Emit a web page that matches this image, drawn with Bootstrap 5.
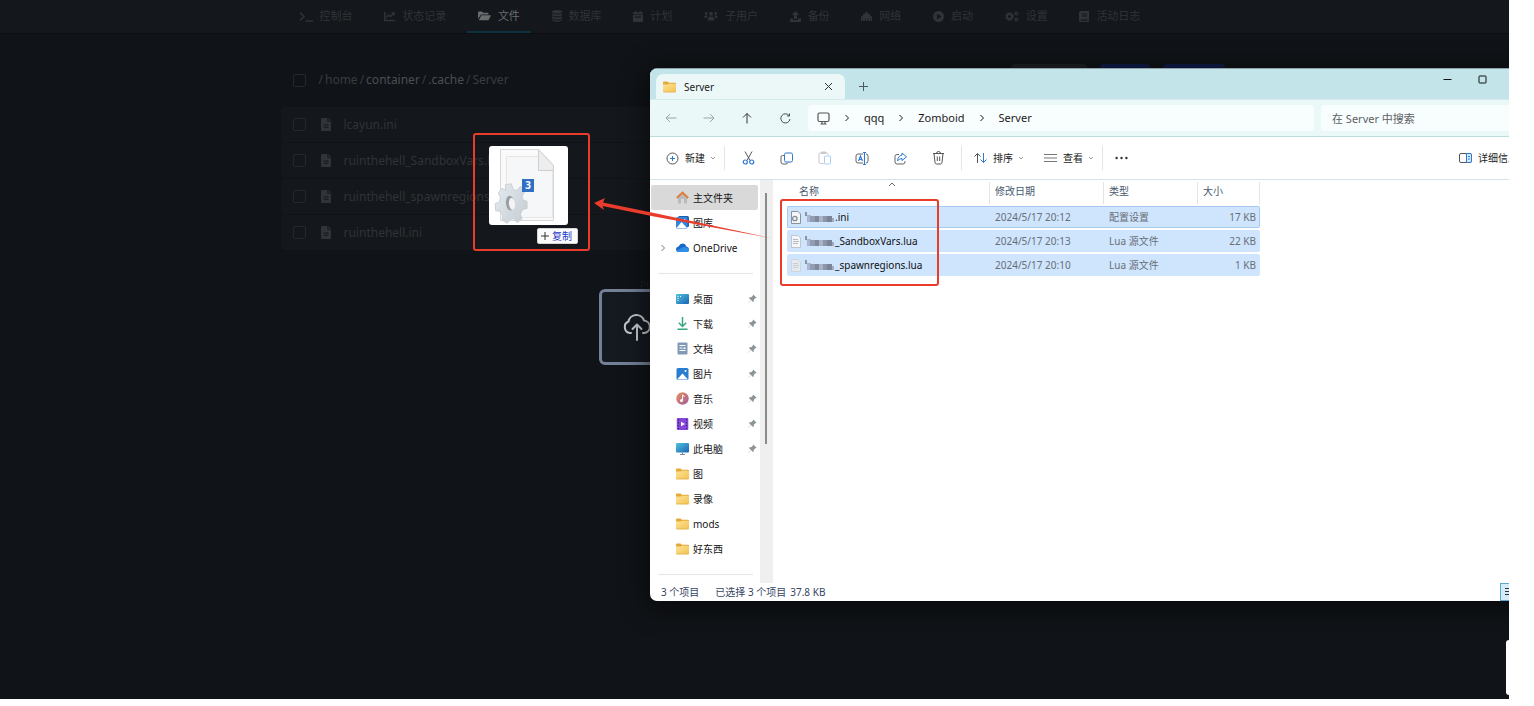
<!DOCTYPE html>
<html lang="zh-CN">
<head>
<meta charset="utf-8">
<meta name="viewport" content="width=device-width, initial-scale=1">
<title>文件 - Server</title>
<link href="https://cdn.jsdelivr.net/npm/bootstrap@5.3.0/dist/css/bootstrap.min.css" rel="stylesheet">
<style>
  body { background: #fff; font-family: "Noto Sans", "Noto Sans CJK SC", sans-serif; }
  a { text-decoration: none; color: inherit; }
  svg { display: block; flex: none; }
  button.btn { --bs-btn-border-width: 0px; font-size: inherit; line-height: inherit; color: inherit; border-radius: 4px; }

  .desktop { margin-right: 25px; min-height: calc(100vh - 7px); background: #101317; color: #35383c; font-size: 12px; }

  /* panel */
  .panel-nav { background: #14171b; height: 34px; border-bottom: 1px solid #0c0e11; }
  .panel-wrap { max-width: 948px; }
  .panel-nav .panel-wrap { height: 33px; padding: 0 77px 0 7px; }
  .panel-nav a { display: flex; align-items: center; gap: 7px; padding: 1px 11px 0; font-size: 11px; color: #313437; white-space: nowrap; border-bottom: 2px solid transparent; }
  .panel-nav a.active { color: #6a6c6e; border-color: #0d3140; }
  .crumbs { margin-top: 30px; height: 32px; padding-left: 12px; }
  .crumb-path { gap: 2px; margin-left: 13px; }
  .crumbs a { color: #4c4f52; }
  .crumbs .dim { color: #3a3d40; }
  .tick { appearance: none; width: 13px; height: 13px; margin: 0; border: 1px solid #24282d; border-radius: 2px; background: transparent; }
  .pbtn { height: 32px; border-radius: 4px; background: #101b48; }
  .pbtn-dir { width: 76px; background: #1d2024; }
  .pbtn-up { width: 50px; margin: 0 13px; }
  .pbtn-new { width: 62px; }
  .file-list { margin-top: 11px; }
  .file-row { height: 35px; margin-bottom: 1px; padding-left: 12px; background: #14171b; border-radius: 3px; color: #303337; }
  .file-row svg { margin: 0 12px 0 15px; }
  .foot { font-size: 10px; line-height: 14px; margin-top: 28px; color: #1d2024; }
  .drop-zone { top: 289px; }
  .drop-card { width: 312px; height: 76px; padding-left: 20px; border: 3px solid #738096; border-radius: 6px; background: #151a21; color: #c3c6cb; }

  /* explorer window */
  .explorer { top: 68px; left: 650px; right: -26px; background: #fff; color: #1b1b1b; font-size: 10px; line-height: 16px; border-top: 1px solid #8ba3a8; border-radius: 7px; box-shadow: 0 4px 28px rgba(0,0,0,.65); overflow: hidden; }
  .titlebar { height: 30px; background: #c3e5ea; padding-left: 6px; }
  .tab { width: 189px; height: 25px; margin-top: 5px; padding: 0 11px 0 7px; gap: 8px; background: #ecf8f8; border-radius: 7px 7px 0 0; }
  .new-tab { width: 20px; }
  .win-btn { width: 35px; height: 21px; }
  .addressbar { height: 38px; background: #ebf8f8; border-top: 1px solid #d5ecee; border-bottom: 1px solid #bcdcdf; font-size: 11px; padding: 0 7px 0 2px; }
  .nav-btn { width: 38px; height: 26px; color: #4a4f52 !important; }
  .nav-btn.off { color: #9aa5a7 !important; }
  .address, .search { height: 26px; background: #f8fdfe; border-radius: 4px; }
  .address { margin-left: 4px; padding-left: 9px; gap: 14px; }
  .search { width: 207px; margin-left: 7px; border: 0; padding: 0 11px; font-size: 11px; color: #555; outline: 0; }
  .search::placeholder { color: #5c6163; opacity: 1; }
  .toolbar { height: 43px; border-bottom: 1px solid #cfe5e8; padding: 0 12px 0 16px; }
  .toolbar .labelled { display: flex; align-items: center; white-space: nowrap; }
  .labelled span { margin: 0 5px 0 6px; }
  .tool { width: 38px; height: 26px; }
  .vsep { width: 1px; height: 24px; background: #e3e5e6; }
  .chev { color: #8d9092; }
  .side { width: 110px; padding-top: 5px; }
  .side a { display: flex; align-items: center; height: 25px; margin: 0 2px 0 1px; padding: 0 1px 0 25px; color: #151515; white-space: nowrap; position: relative; }
  .side a span { margin-left: 4px; }
  .side a.sel { background: #d9d9d9; border-radius: 2px; }
  .side .pin { margin-left: auto; color: #8b9499; }
  .side .twist { position: absolute; left: 9px; color: #777; }
  .side-rule { height: 26px; padding: 13px 7px 0 8px; }
  .side-rule.last { height: 22px; }
  .side-rule hr { margin: 0; border-color: #999; }
  .track { width: 13px; background: #efefef; padding: 13px 0 0 5px; }
  .thumb { width: 2px; height: 251px; background: #8a8a8a; }
  .files { margin-left: 14px; width: 473px; border-collapse: separate; border-spacing: 0 2px; table-layout: fixed; }
  .col-name { width: 203px; }
  .col-date { width: 114px; }
  .col-kind { width: 94px; }
  .files th { height: 22px; padding: 0 5px 4px; font-weight: 400; color: #47586f; border-right: 1px solid #e2e4e6; position: relative; }
  .files th:first-child { padding-left: 12px; }
  .files td { height: 22px; padding: 0 4px 0 5px; line-height: 20px; background: #cfe5fe; color: #686e76; white-space: nowrap; }
  .files td:first-child { color: #111; padding-left: 4px; border-radius: 2px 0 0 2px; }
  .files td:last-child { text-align: right; border-radius: 0 2px 2px 0; }
  .files .focused td { border: 1px solid #a5cbf2; border-width: 1px 0; }
  .files .focused td:first-child { border-left-width: 1px; padding-left: 3px; }
  .files .focused td:last-child { border-right-width: 1px; padding-right: 3px; }
  .sort-mark { left: 101px; top: 0; color: #666; }
  .status { height: 18px; padding-left: 11px; color: #34465f; }
  .view-btn { width: 20px; height: 18px; margin-right: 15px; background: #d5ebf7 !important; border: 1px solid #5fa5d0 !important; border-radius: 0 !important; }

  /* drag image and markup */
  .drag-image { left: 489px; top: 146px; width: 79px; height: 79px; background: #fff; border-radius: 3px; }
  .drag-count { left: 33px; top: 33px; width: 12px; height: 13px; background: #2f6fc6; color: #fff; font-size: 10px; font-weight: 700; line-height: 13px; }
  .drag-tip { left: 537px; top: 228px; width: 41px; height: 16px; background: #fbfbfb; border: 1px solid #d5d5d5; border-radius: 2px; color: #2437c8; font-size: 10px; line-height: 14px; gap: 3px; padding-left: 3px; }
  .mark-box { border: 2px solid #e93c2b; border-radius: 3px; pointer-events: none; }
  .mark-a { left: 473px; top: 133px; width: 117px; height: 118px; }
  .mark-b { left: 780px; top: 199px; width: 159px; height: 87px; }
  .mark-arrow { left: 594px; top: 198px; pointer-events: none; }
  .side-widget { right: 0; top: 640px; width: 3px; height: 55px; background: #fff; border-radius: 3px 0 0 3px; }
</style>
</head>
<body>
<svg width="0" height="0" class="position-absolute" aria-hidden="true">
  <defs>
    <linearGradient id="gf" x1="0" y1="0" x2="1" y2="1"><stop offset="0" stop-color="#fde396"/><stop offset="1" stop-color="#f3c252"/></linearGradient>
    <linearGradient id="gb" x1="0" y1="0" x2="1" y2="1"><stop offset="0" stop-color="#4fc3dc"/><stop offset="1" stop-color="#1b63b5"/></linearGradient>
    <linearGradient id="gm" x1="0" y1="0" x2="1" y2="1"><stop offset="0" stop-color="#e8935a"/><stop offset="1" stop-color="#a05a9e"/></linearGradient>
    <linearGradient id="gg" x1="0" y1="0" x2="1" y2="1"><stop offset="0" stop-color="#e6ecf0"/><stop offset="1" stop-color="#c4ccd2"/></linearGradient>
    <symbol id="folder" viewBox="0 0 13 12"><path d="M0 1.5Q0 .5 1 .5h3.5l1.3 1.2H12q1 0 1 1V6H0z" fill="#e5a938"/><path d="M0 3.600h5l1-.9h6q1 0 1 1v6.600q0 1-1 1H1q-1 0-1-1z" fill="url(#gf)"/><path d="M.3 11h12.400" stroke="#dba53a" stroke-width=".6"/></symbol>
    <symbol id="doc" viewBox="0 0 12 14"><path fill="currentColor" fill-rule="evenodd" d="M1 0h6v4h4v9q0 1-1 1H1q-1 0-1-1V1q0-1 1-1zm7 0l3 3H8zM3 7v1h5V7zm0 2.500v1h5v-1z"/></symbol>
    <symbol id="pin" viewBox="0 0 9 9"><path fill="currentColor" d="M5.200.4l3.400 3.400-.8.5-.6 0-1.500 1.600.1 1.600-.8.6-2-2L.7 8.600l-.3-.3 2.500-2.400-2-2 .7-.7 1.600.1L4.800 1.800z"/></symbol>
    <symbol id="right" viewBox="0 0 6 8"><path d="M1.500 1l3 3-3 3" fill="none" stroke="currentColor"/></symbol>
    <symbol id="down" viewBox="0 0 6 4"><path d="M1 1l2 2 2-2" fill="none" stroke="currentColor" stroke-width=".9"/></symbol>
    <symbol id="blur" viewBox="0 0 30 12">
      <path d="M0 1h2v4H0z" fill="#8a93a6"/><path d="M2 4h4v7H2z" fill="#a9b6cc"/><path d="M5 5h5v6H5z" fill="#939eb3"/><path d="M10 5h4v6h-4z" fill="#7f899c"/><path d="M14 5h4v6h-4z" fill="#a6b3c9"/><path d="M18 5h4v6h-4z" fill="#8c96ab"/><path d="M22 5h5v6h-5z" fill="#7b8397"/><path d="M27 7h2v4h-2z" fill="#9dabc3"/>
    </symbol>
  </defs>
</svg>

<main class="desktop position-relative overflow-hidden">
  <nav class="panel-nav">
    <div class="panel-wrap mx-auto d-flex justify-content-between">
      <a href="#"><svg width="14" height="11" viewBox="0 0 14 11" fill="none" stroke="currentColor" stroke-width="1.600"><path d="M1 1.500l4 4-4 4M6.500 10H14"/></svg>控制台</a>
      <a href="#"><svg width="11" height="11" viewBox="0 0 11 11" fill="none" stroke="currentColor" stroke-width="1.500"><path d="M.8 1v8.500H11M2.500 6.500l2-2.500 2 1.500L10 2M7.500 2H10v2.500"/></svg>状态记录</a>
      <a href="#" class="active"><svg width="13" height="10" viewBox="0 0 13 10" fill="currentColor"><path d="M0 1.500Q0 .5 1 .5h3l1.200 1.200H9.500q1 0 1 1v.8H3L0 8z"/><path d="M3.400 4.300H13L10.500 9.200H.8z"/></svg>文件</a>
      <a href="#"><svg width="10" height="12" viewBox="0 0 10 12" fill="currentColor"><ellipse cx="5" cy="1.800" rx="5" ry="1.800"/><path d="M0 3.200q5 2.400 10 0v2q-5 2.600-10 0zM0 6.300q5 2.400 10 0v2q-5 2.600-10 0zM0 9.300q5 2.400 10 0v1q-5 3-10 0z"/></svg>数据库</a>
      <a href="#"><svg width="10" height="11" viewBox="0 0 10 11" fill="currentColor"><path fill-rule="evenodd" d="M2 0h1.300v1.300h3.400V0H8v1.300h2v2H0v-2h2zM0 4h10v7H0zm2 1.500v1.300h6V5.500z"/></svg>计划</a>
      <a href="#"><svg width="14" height="10" viewBox="0 0 14 10" fill="currentColor"><circle cx="7" cy="2.800" r="2"/><circle cx="2.200" cy="2.300" r="1.400"/><circle cx="11.800" cy="2.300" r="1.400"/><path d="M3.500 9.500Q3.500 5.500 7 5.500t3.500 4zM0 6.700Q0 4.200 2.200 4.200q1.300 0 1.800.8Q3 6 2.900 6.700zM14 6.700q0-2.500-2.200-2.500-1.300 0-1.800.8 1 1 1.100 1.700z"/></svg>子用户</a>
      <a href="#"><svg width="11" height="11" viewBox="0 0 11 11" fill="currentColor"><path d="M5.500 0L9.300 4H7v4H4V4H1.700zM0 7.500h3V9h5V7.500h3V11H0z"/></svg>备份</a>
      <a href="#"><svg width="11" height="9" viewBox="0 0 11 9" fill="currentColor"><path d="M0 9V4.500L2 4V2l2-.3L4.500 0h2L7 1.700 9 2v2l2 .5V9H9.500V6.500H9V9H7.200V6.500h-.6V9H4.500V6.500h-.6V9H2V6.500h-.5V9z"/></svg>网络</a>
      <a href="#"><svg width="11" height="11" viewBox="0 0 11 11" fill="currentColor"><path fill-rule="evenodd" d="M5.500 0a5.500 5.500 0 110 11 5.500 5.500 0 010-11zM4 2.800v5.400l4.500-2.700z"/></svg>启动</a>
      <a href="#"><svg width="14" height="11" viewBox="0 0 14 11" fill="none" stroke="currentColor"><circle cx="4.500" cy="5.500" r="2.500" stroke-width="2"/><circle cx="4.500" cy="5.500" r="4" stroke-dasharray="1.800 1.340"/><circle cx="11.500" cy="2.500" r="1.300" stroke-width="1.300"/><circle cx="11.500" cy="8.500" r="1.300" stroke-width="1.300"/></svg>设置</a>
      <a href="#"><svg width="10" height="11" viewBox="0 0 10 11" fill="currentColor"><path fill-rule="evenodd" d="M1.500 0H10v8.500H9.500v1.300h.5V11H1.500Q0 11 0 9.500v-8Q0 0 1.500 0zM3 2.500v1h5v-1zm0 2v1h5v-1zM1.800 8.500v1.300h6.700V8.500z"/></svg>活动日志</a>
    </div>
  </nav>

  <div class="panel-wrap mx-auto">
    <div class="crumbs d-flex align-items-center">
      <input type="checkbox" class="tick" aria-label="全选">
      <div class="crumb-path d-flex flex-grow-1">
        <span class="dim">/</span><a href="#" class="dim">home</a><span class="dim">/</span><a href="#">container</a><span class="dim">/</span><a href="#">.cache</a><span class="dim">/</span><span class="dim">Server</span>
      </div>
      <div class="d-flex me-1">
        <button class="btn pbtn pbtn-dir p-0" aria-label="新建目录"></button>
        <button class="btn pbtn pbtn-up p-0" aria-label="上传"></button>
        <button class="btn pbtn pbtn-new p-0" aria-label="新建文件"></button>
      </div>
    </div>
    <div class="file-list">
      <div class="file-row d-flex align-items-center"><input type="checkbox" class="tick" id="f1"><svg width="11" height="13"><use href="#doc"/></svg><label for="f1">lcayun.ini</label></div>
      <div class="file-row d-flex align-items-center"><input type="checkbox" class="tick" id="f2"><svg width="11" height="13"><use href="#doc"/></svg><label for="f2">ruinthehell_SandboxVars.lua</label></div>
      <div class="file-row d-flex align-items-center"><input type="checkbox" class="tick" id="f3"><svg width="11" height="13"><use href="#doc"/></svg><label for="f3">ruinthehell_spawnregions.lua</label></div>
      <div class="file-row d-flex align-items-center"><input type="checkbox" class="tick" id="f4"><svg width="11" height="13"><use href="#doc"/></svg><label for="f4">ruinthehell.ini</label></div>
    </div>
    <p class="foot text-center mb-0">Pterodactyl® © 2015 - 2024 Pterodactyl Software</p>
  </div>

  <div class="drop-zone position-absolute start-0 end-0 d-flex justify-content-center">
    <div class="drop-card d-flex align-items-center">
      <svg width="30" height="30" viewBox="0 0 30 30" fill="none" stroke="currentColor" stroke-width="2" stroke-linecap="round" stroke-linejoin="round"><path d="M9 21H8a6 6 0 01-1.500-11.500A8 8 0 0122 8.500 6.300 6.300 0 0122.500 21H21M15 28V13M10.500 17L15 12.500l4.500 4.500"/></svg>
    </div>
  </div>

  <section class="explorer position-absolute">
    <header class="titlebar d-flex">
      <div class="tab d-flex align-items-center">
        <svg width="13" height="12"><use href="#folder"/></svg>
        <span class="flex-grow-1">Server</span>
        <button class="btn p-0" aria-label="关闭标签页"><svg width="11" height="11" viewBox="0 0 11 11" fill="none" stroke="#333"><path d="M2 2l7 7M9 2L2 9"/></svg></button>
      </div>
      <button class="btn new-tab p-0 mt-1 ms-2" aria-label="新标签页"><svg class="mx-auto" width="9" height="9" viewBox="0 0 9 9" stroke="#4c5a5d"><path d="M4.500 0v9M0 4.500h9"/></svg></button>
      <div class="ms-auto d-flex">
        <button class="btn win-btn p-0 d-flex align-items-center justify-content-center" aria-label="最小化"><svg width="9" height="9" viewBox="0 0 9 9" stroke="#111"><path d="M.5 4.500h8"/></svg></button>
        <button class="btn win-btn p-0 d-flex align-items-center justify-content-center" aria-label="最大化"><svg width="9" height="9" viewBox="0 0 9 9" fill="none" stroke="#111"><rect x="1" y="1" width="7" height="7" rx=".5"/></svg></button>
        <button class="btn win-btn p-0 d-flex align-items-center justify-content-center" aria-label="关闭"><svg width="9" height="9" viewBox="0 0 9 9" stroke="#111"><path d="M1 1l7 7M8 1L1 8"/></svg></button>
      </div>
    </header>

    <div class="addressbar d-flex align-items-center">
      <button class="btn nav-btn off p-0 d-flex align-items-center justify-content-center" aria-label="后退"><svg width="12" height="10" viewBox="0 0 12 10" fill="none" stroke="currentColor"><path d="M11.500 5H1M5 1L1 5l4 4"/></svg></button>
      <button class="btn nav-btn off p-0 d-flex align-items-center justify-content-center" aria-label="前进"><svg width="12" height="10" viewBox="0 0 12 10" fill="none" stroke="currentColor"><path d="M.5 5H11M7 1l4 4-4 4"/></svg></button>
      <button class="btn nav-btn p-0 d-flex align-items-center justify-content-center" aria-label="向上"><svg width="10" height="12" viewBox="0 0 10 12" fill="none" stroke="#333"><path d="M5 11.500V1.500M1 5.500l4-4 4 4"/></svg></button>
      <button class="btn nav-btn p-0 d-flex align-items-center justify-content-center" aria-label="刷新"><svg width="11" height="11" viewBox="0 0 11 11" fill="none" stroke="currentColor"><path d="M9 2.500A4.600 4.600 0 1010 6M9.500.5v2.500H7"/></svg></button>
      <div class="address flex-grow-1 d-flex align-items-center">
        <svg width="13" height="13" viewBox="0 0 13 13" fill="none" stroke="#555" stroke-width="1.200"><rect x="1" y="1" width="11" height="8.500" rx="1.500"/><path d="M5 9.500v2M8 9.500v2M3.500 12h6"/></svg>
        <svg width="6" height="8"><use href="#right"/></svg><a href="#">qqq</a>
        <svg width="6" height="8"><use href="#right"/></svg><a href="#">Zomboid</a>
        <svg width="6" height="8"><use href="#right"/></svg><a href="#">Server</a>
      </div>
      <input type="search" class="search" placeholder="在 Server 中搜索" aria-label="搜索">
    </div>

    <div class="toolbar d-flex align-items-center">
      <button class="btn p-0 labelled"><svg width="13" height="13" viewBox="0 0 13 13" fill="none" stroke="#555"><circle cx="6.500" cy="6.500" r="5.500"/><path d="M6.500 4v5M4 6.500h5" stroke="#2f78d0"/></svg><span>新建</span><svg class="chev" width="6" height="4"><use href="#down"/></svg></button>
      <span class="vsep ms-2 me-1"></span>
      <button class="btn tool p-0 d-flex align-items-center justify-content-center" aria-label="剪切"><svg width="13" height="14" viewBox="0 0 13 14" fill="none" stroke="#555"><path d="M3 .5l5 9M10 .5l-5 9"/><g stroke="#2f78d0" stroke-width="1.200"><circle cx="3.300" cy="11" r="2"/><circle cx="9.700" cy="11" r="2"/></g></svg></button>
      <button class="btn tool p-0 d-flex align-items-center justify-content-center" aria-label="复制"><svg width="13" height="13" viewBox="0 0 13 13" fill="none"><path d="M4 3.500H2.500Q1 3.500 1 5v5q0 2 2 2h3q1.500 0 2-1.500" stroke="#666"/><rect x="4.500" y="1" width="8" height="9" rx="1.500" stroke="#2f78d0"/></svg></button>
      <button class="btn tool p-0 d-flex align-items-center justify-content-center" aria-label="粘贴"><svg width="13" height="14" viewBox="0 0 13 14" fill="none"><path d="M5.500 12.500H2.500Q1 12.500 1 11V3q0-1.200 1.500-1.200h6Q10 1.800 10 3.500M3.500 1h4v1.500h-4z" stroke="#c4c7c9"/><rect x="6.500" y="5" width="6" height="8" rx="1" stroke="#a9cdf3"/></svg></button>
      <button class="btn tool p-0 d-flex align-items-center justify-content-center" aria-label="重命名"><svg width="14" height="13" viewBox="0 0 14 13" fill="none"><path d="M8 11H3Q1 11 1 9V4q0-2 2-2h5M11 2q2 0 2 2v5q0 2-2 2" stroke="#666"/><path d="M3.500 9L5.500 4l2 5M4.300 7.500h2.500M9.500.5v12M8 .5h3M8 12.500h3" stroke="#2f78d0" stroke-width="1.100"/></svg></button>
      <button class="btn tool p-0 d-flex align-items-center justify-content-center" aria-label="共享"><svg width="13" height="13" viewBox="0 0 13 13" fill="none"><path d="M5 2.500H3Q1 2.500 1 4.500V10q0 2 2 2h6q2 0 2-2V9" stroke="#666"/><path d="M8 1l4.500 3.800L8 8.500v-2q-3 0-4.500 2.500Q4 3.500 8 3.200z" stroke="#2f78d0"/></svg></button>
      <button class="btn tool p-0 d-flex align-items-center justify-content-center" aria-label="删除"><svg width="13" height="14" viewBox="0 0 13 14" fill="none" stroke="#555"><path d="M1 2.500h11M4.500 2.500q0-2 2-2t2 2M2 2.500l1 9q.2 1.500 1.500 1.500h4q1.300 0 1.500-1.500l1-9M5.300 5.500v4.500M7.700 5.500v4.500"/></svg></button>
      <span class="vsep me-2 ms-1"></span>
      <button class="btn p-0 labelled ms-1"><svg width="13" height="12" viewBox="0 0 13 12" fill="none"><path d="M3.500 11V1.500M.5 4.500l3-3 3 3" stroke="#555"/><path d="M9.500 1v9.500M6.500 7.500l3 3 3-3" stroke="#2f78d0"/></svg><span>排序</span><svg class="chev" width="6" height="4"><use href="#down"/></svg></button>
      <button class="btn p-0 labelled ms-3 ps-1"><svg width="13" height="10" viewBox="0 0 13 10" stroke="#777"><path d="M0 1.500h13M0 5h13M0 8.500h13"/></svg><span>查看</span><svg class="chev" width="6" height="4"><use href="#down"/></svg></button>
      <span class="vsep ms-2 me-1"></span>
      <button class="btn p-0 ms-2" aria-label="更多"><svg width="13" height="4" viewBox="0 0 13 4" fill="#333"><circle cx="1.600" cy="2" r="1.200"/><circle cx="6.500" cy="2" r="1.200"/><circle cx="11.400" cy="2" r="1.200"/></svg></button>
      <button class="btn p-0 labelled ms-auto"><svg width="13" height="10" viewBox="0 0 13 10" fill="none"><rect x=".5" y=".5" width="12" height="9" rx="1.500" stroke="#555"/><path d="M7.500.5H11q1.500 0 1.500 1.500v6q0 1.500-1.500 1.500H7.500z" fill="#d9eafb" stroke="#2f78d0"/><path d="M9 3.500h2M9 6h2" stroke="#2f78d0"/></svg><span>详细信息</span></button>
    </div>

    <div class="d-flex">
      <nav class="side">
        <a href="#" class="sel"><svg width="13" height="13" viewBox="0 0 13 13"><path d="M2 6l4.500-4L11 6v6.500H8V8H5v4.500H2z" fill="#b9bcbf"/><path d="M.8 7L6.500 1.500 12.200 7" fill="none" stroke="#e07a35" stroke-width="1.800"/></svg><span>主文件夹</span></a>
        <a href="#"><svg width="13" height="13" viewBox="0 0 13 13"><rect x="2" y="0" width="11" height="11" rx="1.500" fill="#1c5ea8"/><rect x="0" y="1" width="11.500" height="11.500" rx="1.500" fill="#2f86dc"/><path d="M.5 12L5.500 6l5.500 6z" fill="#fff"/><circle cx="8.500" cy="4" r="1" fill="#fff"/></svg><span>图库</span></a>
        <a href="#"><svg class="twist" width="6" height="8"><use href="#right"/></svg><svg width="13" height="9" viewBox="0 0 13 9"><path d="M3 9Q0 9 0 6.200 0 4 2.500 3.500 4 .3 7 .5q2.600.2 3.300 3Q13 4 13 6.500 13 9 10.500 9z" fill="#1b66c9"/><path d="M3 9Q1 9 .5 7.500L7.500 4q5 0 5.500 2.500Q13 9 10.500 9z" fill="#2f8fe8"/></svg><span>OneDrive</span></a>
        <div class="side-rule"><hr></div>
        <a href="#"><svg width="13" height="10" viewBox="0 0 13 10"><rect width="13" height="10" rx="1" fill="url(#gb)"/><path d="M1.500 2.500h1M1.500 4.500h1M1.500 6.500h1M4 2.500h1" stroke="#fff"/></svg><span>桌面</span><svg class="pin" width="9" height="9"><use href="#pin"/></svg></a>
        <a href="#"><svg width="13" height="13" viewBox="0 0 13 13" fill="none" stroke="#37a780" stroke-width="1.500"><path d="M6.500 0v9M2.800 5.800l3.700 3.700 3.700-3.700M1.500 12.200h10"/></svg><span>下载</span><svg class="pin" width="9" height="9"><use href="#pin"/></svg></a>
        <a href="#"><svg width="13" height="13" viewBox="0 0 13 13"><rect x="1.500" y=".5" width="10" height="12" rx="1" fill="#8299b6"/><path d="M3.500 3.500h6M3.500 6h3M3.500 8.500h6" stroke="#fff"/><path d="M7.500 5.500h2v1.500h-2z" fill="#fff"/></svg><span>文档</span><svg class="pin" width="9" height="9"><use href="#pin"/></svg></a>
        <a href="#"><svg width="13" height="12" viewBox="0 0 13 12"><rect x=".5" width="12" height="12" rx="1.500" fill="#2a7dd0"/><path d="M1 11.500l5.500-6 5.500 6z" fill="#fff"/><circle cx="9.500" cy="3" r="1" fill="#fff"/></svg><span>图片</span><svg class="pin" width="9" height="9"><use href="#pin"/></svg></a>
        <a href="#"><svg width="13" height="13" viewBox="0 0 13 13"><circle cx="6.500" cy="6.500" r="6.200" fill="url(#gm)"/><circle cx="5.500" cy="8.500" r="1.500" fill="#fff"/><path d="M6.600 8.500V3l2 1.500" fill="none" stroke="#fff"/></svg><span>音乐</span><svg class="pin" width="9" height="9"><use href="#pin"/></svg></a>
        <a href="#"><svg width="13" height="12" viewBox="0 0 13 12"><rect x=".8" width="11.500" height="12" rx="1" fill="#8446d8"/><path d="M2.300 1v10M10.700 1v10" stroke="#35206b" stroke-dasharray="1.500 1.500"/><path d="M5 3.800v4.400L9 6z" fill="#fff"/></svg><span>视频</span><svg class="pin" width="9" height="9"><use href="#pin"/></svg></a>
        <a href="#"><svg width="13" height="12" viewBox="0 0 13 12"><rect width="13" height="9.500" rx="1" fill="url(#gb)"/><path d="M6.500 9.500v2M4 11.500h5" stroke="#7b8a94"/></svg><span>此电脑</span><svg class="pin" width="9" height="9"><use href="#pin"/></svg></a>
        <a href="#"><svg width="13" height="12"><use href="#folder"/></svg><span>图</span></a>
        <a href="#"><svg width="13" height="12"><use href="#folder"/></svg><span>录像</span></a>
        <a href="#"><svg width="13" height="12"><use href="#folder"/></svg><span>mods</span></a>
        <a href="#"><svg width="13" height="12"><use href="#folder"/></svg><span>好东西</span></a>
        <div class="side-rule last"><hr></div>
      </nav>
      <div class="track"><div class="thumb"></div></div>
      <div>
        <table class="files">
          <colgroup><col class="col-name"><col class="col-date"><col class="col-kind"><col></colgroup>
          <thead><tr>
            <th>名称<svg class="sort-mark position-absolute" width="8" height="5" viewBox="0 0 8 5" fill="none" stroke="currentColor"><path d="M1 4l3-3 3 3"/></svg></th>
            <th>修改日期</th><th>类型</th><th>大小</th>
          </tr></thead>
          <tbody>
            <tr class="focused"><td><div class="d-flex align-items-center"><svg width="10" height="13" viewBox="0 0 10 13"><path d="M.5.500h6.500L9.500 3v9.500h-9z" fill="#f4f6f8" stroke="#8a929b"/><circle cx="3.800" cy="7.500" r="2.200" fill="none" stroke="#858d96" stroke-width="1.300"/></svg><svg class="ms-1" width="30" height="12"><use href="#blur"/></svg>.ini</div></td><td>2024/5/17 20:12</td><td>配置设置</td><td>17 KB</td></tr>
            <tr><td><div class="d-flex align-items-center"><svg width="10" height="13" viewBox="0 0 10 13"><path d="M.5.500h6.500L9.500 3v9.500h-9z" fill="#f4f6f8" stroke="#c0c6cd"/><path d="M2 4.500h5M2 6.500h6M2 8.500h5" stroke="#b3bac2"/></svg><svg class="ms-1" width="30" height="12"><use href="#blur"/></svg>_SandboxVars.lua</div></td><td>2024/5/17 20:13</td><td>Lua 源文件</td><td>22 KB</td></tr>
            <tr><td><div class="d-flex align-items-center"><svg width="10" height="13" viewBox="0 0 10 13"><path d="M.5.500h6.500L9.500 3v9.500h-9z" fill="#e6eaee" stroke="#d0d5db"/><path d="M2 4.500h5M2 6.500h6M2 8.500h5" stroke="#c9ced4"/></svg><svg class="ms-1" width="30" height="12"><use href="#blur"/></svg>_spawnregions.lua</div></td><td>2024/5/17 20:10</td><td>Lua 源文件</td><td>1 KB</td></tr>
          </tbody>
        </table>
      </div>
    </div>

    <footer class="status d-flex align-items-center">
      <span>3 个项目</span><span class="ms-3">已选择 3 个项目</span><span class="ms-1">37.8 KB</span>
      <button class="btn view-btn p-0 ms-auto" aria-label="详细信息视图"><svg class="ms-1" width="12" height="10" viewBox="0 0 12 10" stroke="#333"><path d="M0 1.500h12M0 4.500h12M0 7.500h12"/></svg></button>
    </footer>
  </section>

  <div class="drag-image position-absolute">
    <svg width="79" height="79" viewBox="0 0 79 79">
      <path d="M11.500 3.500h38l15 16v55h-53z" fill="#fafafa" stroke="#d8d8d8"/>
      <path d="M17.500 10.500h32l14 10v51h-46z" fill="#f6f7f8" stroke="#e6e6e6"/>
      <path d="M49.500 3.500v21h15v-5z" fill="#eceded" stroke="#cfcfcf"/>
      <g transform="translate(22 57) scale(.85 1) rotate(-8)"><path d="M-4-19h7l1.500 6 4 1.500 5-3.500 4 6-3.500 4 .5 4 4.500 2-1 7-5.500.5-3 4 1 5-6 3-3.500-4.500h-4l-4 3.500-5.500-4 1-5-2.500-4-5-1.500.5-7 5-1 2-4-2-5 5-4 4 2.500z" fill="url(#gg)" stroke="#c3cacf" stroke-width=".8"/><ellipse cx="-1" cy="0" rx="5" ry="7.500" fill="#9b9fa2"/><ellipse cx="1" cy="1" rx="3.500" ry="6" fill="#f3f4f5"/></g>
    </svg>
    <span class="drag-count position-absolute text-center">3</span>
  </div>
  <div class="drag-tip position-absolute d-flex align-items-center text-nowrap"><svg width="8" height="8" viewBox="0 0 8 8" stroke="#333"><path d="M4 0v8M0 4h8"/></svg>复制</div>

  <div class="mark-box mark-a position-absolute"></div>
  <div class="mark-box mark-b position-absolute"></div>
  <svg class="mark-arrow position-absolute" width="180" height="44" viewBox="0 0 180 44" fill="#e93c2b"><path d="M0 5L11 0l-2 4.500L60 15 179 40.500 60 18.500 8.500 8 10 12z"/></svg>
  <div class="side-widget position-absolute"></div>
</main>
<script src="https://cdn.jsdelivr.net/npm/bootstrap@5.3.0/dist/js/bootstrap.bundle.min.js"></script>
</body>
</html>
